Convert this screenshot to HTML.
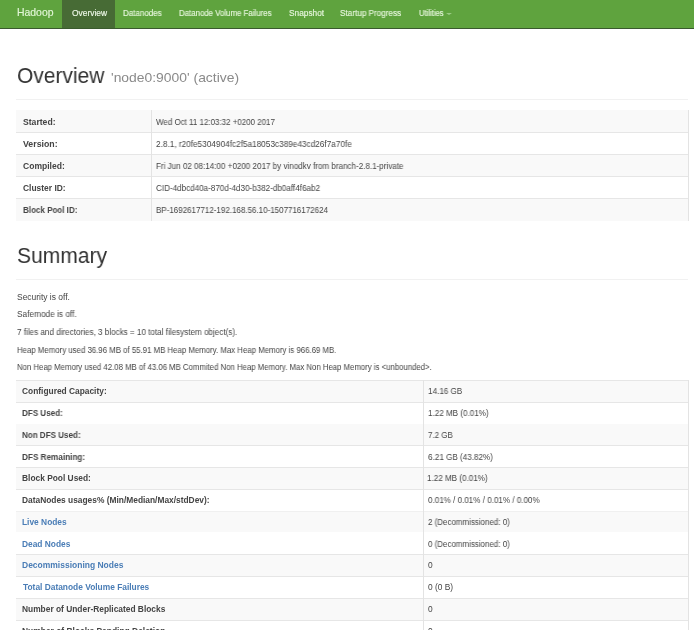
<!DOCTYPE html>
<html><head><meta charset="utf-8">
<style>
*{box-sizing:border-box;margin:0;padding:0}
html,body{width:694px;height:630px;overflow:hidden;background:#fff}
body{font-family:"Liberation Sans",sans-serif;color:#333;position:relative}
.t{position:absolute;white-space:nowrap;line-height:20px;transform-origin:0 0;will-change:transform}
.nav{position:absolute;left:0;top:0;width:694px;height:29px;background:#5fa33e;border-bottom:1px solid #3a5a2e}
.act{position:absolute;left:61.7px;top:0;width:53.1px;height:28px;background:#476b35}
.caret{position:absolute;left:445.5px;top:12.6px;width:0;height:0;border-left:3px solid transparent;border-right:3px solid transparent;border-top:2.4px solid #9ccc86}
.hr{position:absolute;left:16px;width:672px;height:1px;background:#f1f1f1}
.row{position:absolute;left:16px;width:672px}
.hl{position:absolute;left:16px;width:672px;height:1px;background:#e6e6e6}
.vl{position:absolute;width:1px;background:#e3e3e3}
</style></head><body>
<div class="nav"></div>
<div class="act"></div>
<div class="caret"></div>
<div class="hr" style="top:99px"></div>
<div class="hr" style="top:279px"></div>
<div class="row" style="top:110.30px;height:21.86px;background:#f9f9f9"></div>
<div class="row" style="top:132.16px;height:21.86px;background:#fff"></div>
<div class="row" style="top:154.02px;height:21.86px;background:#f9f9f9"></div>
<div class="row" style="top:175.88px;height:21.86px;background:#fff"></div>
<div class="row" style="top:197.74px;height:23.06px;background:#f9f9f9"></div>
<div class="hl" style="top:132.16px"></div>
<div class="hl" style="top:154.02px"></div>
<div class="hl" style="top:175.88px"></div>
<div class="hl" style="top:197.74px"></div>
<div class="vl" style="left:151px;top:110.30px;height:110.50px"></div>
<div class="vl" style="left:688px;top:110.30px;height:110.50px"></div>
<div class="row" style="top:379.90px;height:21.80px;background:#f9f9f9"></div>
<div class="row" style="top:401.70px;height:21.80px;background:#fff"></div>
<div class="row" style="top:423.50px;height:21.80px;background:#f9f9f9"></div>
<div class="row" style="top:445.30px;height:21.80px;background:#fff"></div>
<div class="row" style="top:467.10px;height:21.80px;background:#f9f9f9"></div>
<div class="row" style="top:488.90px;height:21.80px;background:#fff"></div>
<div class="row" style="top:510.70px;height:21.80px;background:#f9f9f9"></div>
<div class="row" style="top:532.50px;height:21.80px;background:#fff"></div>
<div class="row" style="top:554.30px;height:21.80px;background:#f9f9f9"></div>
<div class="row" style="top:576.10px;height:21.80px;background:#fff"></div>
<div class="row" style="top:597.90px;height:21.80px;background:#f9f9f9"></div>
<div class="row" style="top:619.70px;height:21.80px;background:#fff"></div>
<div class="hl" style="top:379.90px"></div>
<div class="hl" style="top:401.70px"></div>
<div class="hl" style="top:445.30px"></div>
<div class="hl" style="top:467.10px"></div>
<div class="hl" style="top:488.90px"></div>
<div class="hl" style="top:510.70px;background:#f0f0f0"></div>
<div class="hl" style="top:554.30px"></div>
<div class="hl" style="top:576.10px"></div>
<div class="hl" style="top:597.90px"></div>
<div class="hl" style="top:619.70px"></div>
<div class="hl" style="top:641.50px"></div>
<div class="vl" style="left:423px;top:379.90px;height:261.60px"></div>
<div class="vl" style="left:688px;top:379.90px;height:261.60px"></div>
<span class="t" style="left:16.69px;top:3.40px;font-size:10.2px;color:#e2f6d6;-webkit-text-stroke:0.15px #e2f6d6;transform:scaleX(1.0231)">Hadoop</span>
<span class="t" style="left:71.56px;top:3.20px;font-size:8.3px;color:#eef9e8;-webkit-text-stroke:0.15px #eef9e8;transform:scaleX(1.0123)">Overview</span>
<span class="t" style="left:123.13px;top:3.10px;font-size:8.3px;color:#e6f6dc;-webkit-text-stroke:0.15px #e6f6dc;transform:scaleX(0.9633)">Datanodes</span>
<span class="t" style="left:179.14px;top:3.10px;font-size:8.3px;color:#e6f6dc;-webkit-text-stroke:0.15px #e6f6dc;transform:scaleX(0.9457)">Datanode Volume Failures</span>
<span class="t" style="left:288.88px;top:3.10px;font-size:8.3px;color:#e6f6dc;-webkit-text-stroke:0.15px #e6f6dc">Snapshot</span>
<span class="t" style="left:340.49px;top:3.10px;font-size:8.3px;color:#e6f6dc;-webkit-text-stroke:0.15px #e6f6dc;transform:scaleX(0.9835)">Startup Progress</span>
<span class="t" style="left:418.67px;top:3.10px;font-size:8.3px;color:#e6f6dc;-webkit-text-stroke:0.15px #e6f6dc;transform:scaleX(0.9189)">Utilities</span>
<span class="t" style="left:16.50px;top:65.60px;font-size:22.5px;color:#333;transform:scaleX(0.9316)">Overview</span>
<span class="t" style="left:111.06px;top:68.40px;font-size:13.4px;color:#8a8a8a;transform:scaleX(1.0368)">'node0:9000' (active)</span>
<span class="t" style="left:16.67px;top:246.40px;font-size:22.5px;color:#333;transform:scaleX(0.9359)">Summary</span>
<span class="t" style="left:17.07px;top:286.80px;font-size:8.4px;color:#444;transform:scaleX(1.0090)">Security is off.</span>
<span class="t" style="left:17.09px;top:304.45px;font-size:8.4px;color:#444;transform:scaleX(0.9891)">Safemode is off.</span>
<span class="t" style="left:17.22px;top:322.10px;font-size:8.4px;color:#444;transform:scaleX(0.9669)">7 files and directories, 3 blocks = 10 total filesystem object(s).</span>
<span class="t" style="left:17.13px;top:339.75px;font-size:8.4px;color:#444;transform:scaleX(0.9341)">Heap Memory used 36.96 MB of 55.91 MB Heap Memory. Max Heap Memory is 966.69 MB.</span>
<span class="t" style="left:17.16px;top:357.40px;font-size:8.4px;color:#444;transform:scaleX(0.9284)">Non Heap Memory used 42.08 MB of 43.06 MB Commited Non Heap Memory. Max Non Heap Memory is &lt;unbounded&gt;.</span>
<span class="t" style="left:22.70px;top:112.20px;font-size:8.4px;color:#444;font-weight:bold;transform:scaleX(1.0282)">Started:</span>
<span class="t" style="left:22.96px;top:134.30px;font-size:8.4px;color:#444;font-weight:bold;transform:scaleX(1.0466)">Version:</span>
<span class="t" style="left:22.82px;top:156.10px;font-size:8.4px;color:#444;font-weight:bold;transform:scaleX(1.0210)">Compiled:</span>
<span class="t" style="left:22.83px;top:177.90px;font-size:8.4px;color:#444;font-weight:bold;transform:scaleX(1.0073)">Cluster ID:</span>
<span class="t" style="left:22.73px;top:199.60px;font-size:8.4px;color:#444;font-weight:bold;transform:scaleX(0.9580)">Block Pool ID:</span>
<span class="t" style="left:155.72px;top:112.20px;font-size:8.4px;color:#444;transform:scaleX(0.9499)">Wed Oct 11 12:03:32 +0200 2017</span>
<span class="t" style="left:155.59px;top:134.30px;font-size:8.4px;color:#444;transform:scaleX(0.9824)">2.8.1, r20fe5304904fc2f5a18053c389e43cd26f7a70fe</span>
<span class="t" style="left:156.33px;top:156.10px;font-size:8.4px;color:#444;transform:scaleX(0.9619)">Fri Jun 02 08:14:00 +0200 2017 by vinodkv from branch-2.8.1-private</span>
<span class="t" style="left:155.58px;top:177.90px;font-size:8.4px;color:#444;transform:scaleX(0.9657)">CID-4dbcd40a-870d-4d30-b382-db0aff4f6ab2</span>
<span class="t" style="left:156.34px;top:199.60px;font-size:8.4px;color:#444;transform:scaleX(0.9543)">BP-1692617712-192.168.56.10-1507716172624</span>
<span class="t" style="left:22.33px;top:381.20px;font-size:8.4px;color:#444;font-weight:bold">Configured Capacity:</span>
<span class="t" style="left:22.23px;top:402.98px;font-size:8.4px;color:#444;font-weight:bold;transform:scaleX(0.9616)">DFS Used:</span>
<span class="t" style="left:22.23px;top:424.76px;font-size:8.4px;color:#444;font-weight:bold;transform:scaleX(0.9592)">Non DFS Used:</span>
<span class="t" style="left:22.22px;top:446.54px;font-size:8.4px;color:#444;font-weight:bold;transform:scaleX(0.9744)">DFS Remaining:</span>
<span class="t" style="left:22.21px;top:468.32px;font-size:8.4px;color:#444;font-weight:bold;transform:scaleX(0.9938)">Block Pool Used:</span>
<span class="t" style="left:22.20px;top:490.10px;font-size:8.4px;color:#444;font-weight:bold">DataNodes usages% (Min/Median/Max/stdDev):</span>
<span class="t" style="left:22.20px;top:511.88px;font-size:8.4px;color:#4a7db6;font-weight:bold">Live Nodes</span>
<span class="t" style="left:21.81px;top:533.66px;font-size:8.4px;color:#4a7db6;font-weight:bold;transform:scaleX(0.9918)">Dead Nodes</span>
<span class="t" style="left:21.80px;top:555.44px;font-size:8.4px;color:#4a7db6;font-weight:bold;transform:scaleX(1.0135)">Decommissioning Nodes</span>
<span class="t" style="left:22.61px;top:577.22px;font-size:8.4px;color:#4a7db6;font-weight:bold">Total Datanode Volume Failures</span>
<span class="t" style="left:22.20px;top:599.00px;font-size:8.4px;color:#444;font-weight:bold">Number of Under-Replicated Blocks</span>
<span class="t" style="left:22.20px;top:620.78px;font-size:8.4px;color:#444;font-weight:bold;transform:scaleX(1.0065)">Number of Blocks Pending Deletion</span>
<span class="t" style="left:428.48px;top:381.20px;font-size:8.4px;color:#444;transform:scaleX(0.9675)">14.16 GB</span>
<span class="t" style="left:428.48px;top:402.98px;font-size:8.4px;color:#444;transform:scaleX(0.9647)">1.22 MB (0.01%)</span>
<span class="t" style="left:427.63px;top:424.76px;font-size:8.4px;color:#444;transform:scaleX(0.9487)">7.2 GB</span>
<span class="t" style="left:427.69px;top:446.54px;font-size:8.4px;color:#444;transform:scaleX(0.9671)">6.21 GB (43.82%)</span>
<span class="t" style="left:427.48px;top:468.32px;font-size:8.4px;color:#444;transform:scaleX(0.9647)">1.22 MB (0.01%)</span>
<span class="t" style="left:427.72px;top:490.10px;font-size:8.4px;color:#444;transform:scaleX(0.9629)">0.01% / 0.01% / 0.01% / 0.00%</span>
<span class="t" style="left:427.70px;top:511.88px;font-size:8.4px;color:#444;transform:scaleX(0.9497)">2 (Decommissioned: 0)</span>
<span class="t" style="left:427.72px;top:533.66px;font-size:8.4px;color:#444;transform:scaleX(0.9495)">0 (Decommissioned: 0)</span>
<span class="t" style="left:427.72px;top:555.44px;font-size:8.4px;color:#444;transform:scaleX(0.9500)">0</span>
<span class="t" style="left:427.70px;top:577.22px;font-size:8.4px;color:#444">0 (0 B)</span>
<span class="t" style="left:427.72px;top:599.00px;font-size:8.4px;color:#444;transform:scaleX(0.9500)">0</span>
<span class="t" style="left:427.72px;top:620.78px;font-size:8.4px;color:#444;transform:scaleX(0.9500)">0</span>
</body></html>
